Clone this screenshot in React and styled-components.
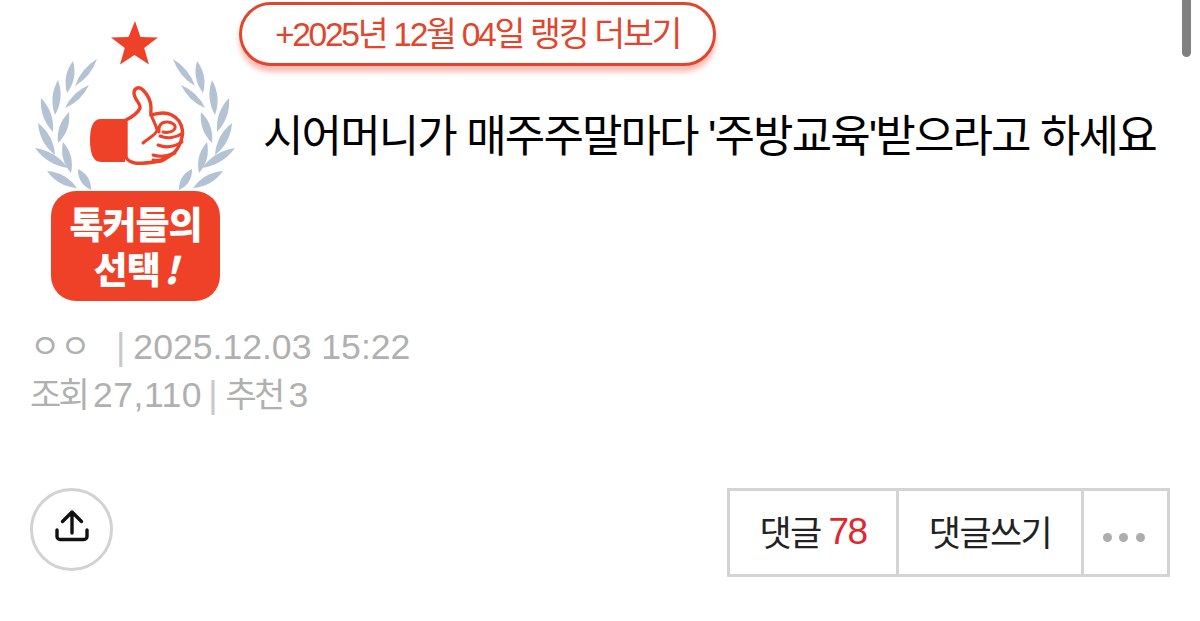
import styled, { createGlobalStyle } from "styled-components";

const GlobalStyle = createGlobalStyle`
  html, body {
    margin: 0;
    padding: 0;
    background: #fff;
    overflow: hidden;
  }
  body {
    font-family: "Liberation Sans", "Noto Sans CJK KR", sans-serif;
  }
`;

const Page = styled.div`
  position: relative;
  width: 1200px;
  height: 621px;
  padding: 0 30px;
  box-sizing: border-box;
`;

const ScrollThumb = styled.div`
  position: absolute;
  top: -10px;
  right: 9px;
  width: 9px;
  height: 67px;
  border-radius: 5px;
  background: #808080;
`;

const TopRow = styled.section`
  display: flex;
  height: 319px;
`;

const BadgeColumn = styled.div`
  display: flex;
  flex-direction: column;
  align-items: center;
  width: 210px;
  margin-right: -1px;
  padding-top: 19px;
  box-sizing: border-box;
`;

const BadgeArt = styled.svg`
  display: block;
  width: 210px;
  height: 182px;
`;

const BadgeLabel = styled.div`
  position: relative;
  width: 169px;
  height: 110px;
  margin: -10px 0 0 1px;
  border-radius: 25px;
  background: #ee4128;
  color: #fff;
  display: flex;
  flex-direction: column;
  align-items: center;
  justify-content: center;
  font-family: "Noto Sans CJK KR", sans-serif;
  font-weight: 900;
  font-size: 37px;
  line-height: 45px;
  letter-spacing: -1px;
`;

const BadgeLine = styled.div`
  height: 45px;
`;

const Bang = styled.span`
  font-style: italic;
  margin-left: 4px;
`;

const Headline = styled.div`
  flex: 1;
  padding: 2px 0 0 0;
  min-width: 0;
`;

const RankPill = styled.div`
  box-sizing: border-box;
  width: 477px;
  height: 64px;
  padding-bottom: 5px;
  border: 3px solid #e2452c;
  border-radius: 32px;
  background: #fff;
  box-shadow: 0 6px 5px rgba(240, 90, 70, 0.4);
  color: #e2452c;
  display: flex;
  align-items: center;
  justify-content: center;
  font-size: 33.6px;
  letter-spacing: -2.3px;
  white-space: nowrap;
`;

const Title = styled.h1`
  margin: 43px 0 0 24px;
  font-size: 44px;
  line-height: 56px;
  font-weight: 400;
  letter-spacing: -1.9px;
  color: #000;
  white-space: nowrap;
`;

const Meta = styled.div`
  color: #b0b0b0;
  font-size: 35.6px;
  line-height: 48px;
  margin-top: 4px;
  white-space: nowrap;
`;

const MetaRow = styled.div`
  display: flex;
  align-items: center;
`;

const Author = styled.span`
  width: 80px;
  font-size: 33px;
`;

const MetaLabel = styled.span`
  font-size: 34px;
  letter-spacing: -2.8px;
  margin-right: 6px;
`;

const MetaValue = styled.span`
  letter-spacing: ${(p) => p.$spacing || "0"};
`;

const Divider = styled.span`
  color: #c8c8c8;
  font-size: 36px;
  margin: 0 8px 0 6px;
`;

const ActionRow = styled.div`
  display: flex;
  justify-content: space-between;
  align-items: flex-start;
  margin-top: 69px;
`;

const ShareButton = styled.button`
  width: 83px;
  height: 83px;
  box-sizing: border-box;
  border: 3px solid #d2d2d2;
  border-radius: 50%;
  background: #fff;
  padding: 0 0 7px;
  display: flex;
  align-items: center;
  justify-content: center;
`;

const CommentBar = styled.div`
  display: flex;
  height: 89px;
  border: 3px solid #d4d4d4;
  box-sizing: border-box;
`;

const BarButton = styled.div`
  width: ${(p) => p.$width}px;
  box-sizing: border-box;
  padding-bottom: 5px;
  border-left: ${(p) => (p.$first ? "0" : "3px solid #d4d4d4")};
  display: flex;
  align-items: center;
  justify-content: center;
  gap: 8px;
  font-size: 35px;
  letter-spacing: -1.6px;
  color: #222;
`;

const Count = styled.span`
  color: #e0272d;
  font-size: 37px;
  margin-top: 4px;
`;

const Dots = styled.div`
  display: flex;
  gap: 7.5px;
  margin: 15px 4px 0 0;
`;

const Dot = styled.i`
  width: 9px;
  height: 9px;
  border-radius: 50%;
  background: #adadad;
`;

// leaves are [tipX, tipY, baseX, baseY, bulge] in badge coordinates
const leaves = [
  [97, 59, 75, 86, 4],
  [73, 61, 67, 93, 5],
  [89, 85, 65, 108, 4],
  [58, 80, 55, 115, 5],
  [69, 112, 58, 143, 5],
  [41, 98, 53, 132, 5],
  [38, 123, 55, 155, 5],
  [63, 142, 71, 173, 5],
  [35, 148, 68, 168, 5],
  [47, 171, 77, 188, 5],
  [78, 169, 91, 190, 5],
];

const leafPath = ([x1, y1, x2, y2, b]) => {
  const mx = (x1 + x2) / 2;
  const my = (y1 + y2) / 2;
  const dx = x2 - x1;
  const dy = y2 - y1;
  const len = Math.hypot(dx, dy);
  const nx = (-dy / len) * b * 1.6;
  const ny = (dx / len) * b * 1.6;
  return `M${x1} ${y1}Q${mx + nx} ${my + ny} ${x2} ${y2}Q${mx - nx} ${my - ny} ${x1} ${y1}Z`;
};

const Wreath = () => (
  <g fill="#b3c3d3">
    {leaves.map((l) => (
      <path key={l.join()} d={leafPath(l)} />
    ))}
  </g>
);

const BadgeDrawing = () => (
  <BadgeArt viewBox="30 19 210 182">
    <path
      fill="#ee4128"
      d="M135 21l5.500 16 17.500.5-13.800 10.500 4.800 16.500-14.500-9.500-14.500 9.500 4.800-16.500-13.800-10.500 17.500-.5z"
    />
    <Wreath />
    <g transform="translate(270 0) scale(-1 1)">
      <Wreath />
    </g>
    <path fill="#ee4128" d="M125 119H101c-8 0-11 8-11 21s3 22 11 22h24z" />
    <path
      fill="#fff"
      stroke="#ee4128"
      strokeWidth="3.4"
      strokeLinejoin="round"
      d="M126 120c6-3 12-7 14-12 1-4-6-9-6-15 0-5 5-7 9-3 5 5 8 12 8 18 0 3-.5 5 0 7 4-1 8-2 12-2 7 0 12 3 16 8 4 6 4 14 2 20-2 6-5 11-10 14-4 3-6 5-10 6-8 1-18 3-26 2-5-1-8-3-9-6z"
    />
    <path
      fill="none"
      stroke="#ee4128"
      strokeWidth="3"
      strokeLinecap="round"
      strokeLinejoin="round"
      d="M151 115c2 5 5 10 6 15 0 4-8 8-14 13M159 132c-1-6 2-10 8-10 5 0 9 3 8 6-1 4-8 5-12 4M160 136c7 3 16 2 23-3M158 145c7 3 16 2 24-3M153 155c6 2 15 1 22-2M153 160c4 1 8 0 12-2"
    />
  </BadgeArt>
);

const ShareGlyph = styled.svg`
  width: 36px;
  height: 36px;
  fill: none;
  stroke: #111;
  stroke-width: 3.4;
  stroke-linecap: round;
  stroke-linejoin: round;
`;

const ShareIcon = () => (
  <ShareGlyph viewBox="0 0 36 36">
    <path d="M18 25V4.500M8.500 13.500L18 4l9.500 9.500" />
    <path d="M3 22v6.500a3 3 0 0 0 3 3h24a3 3 0 0 0 3-3V22" />
  </ShareGlyph>
);

const App = () => {
  return (
    <Page>
      <GlobalStyle />
      <ScrollThumb />
      <TopRow>
        <BadgeColumn>
          <BadgeDrawing />
          <BadgeLabel>
            <BadgeLine>톡커들의</BadgeLine>
            <BadgeLine>
              선택<Bang>!</Bang>
            </BadgeLine>
          </BadgeLabel>
        </BadgeColumn>
        <Headline>
          <RankPill>+2025년 12월 04일 랭킹 더보기</RankPill>
          <Title>시어머니가 매주주말마다 '주방교육'받으라고 하세요</Title>
        </Headline>
      </TopRow>
      <Meta>
        <MetaRow>
          <Author>ㅇㅇ</Author>
          <Divider>|</Divider>
          <MetaValue>2025.12.03 15:22</MetaValue>
        </MetaRow>
        <MetaRow>
          <MetaLabel>조회</MetaLabel>
          <MetaValue $spacing="0.5px">27,110</MetaValue>
          <Divider>|</Divider>
          <MetaLabel>추천</MetaLabel>
          <MetaValue>3</MetaValue>
        </MetaRow>
      </Meta>
      <ActionRow>
        <ShareButton aria-label="공유">
          <ShareIcon />
        </ShareButton>
        <CommentBar>
          <BarButton $first $width={166}>
            댓글 <Count>78</Count>
          </BarButton>
          <BarButton $width={185}>댓글쓰기</BarButton>
          <BarButton $width={86}>
            <Dots>
              <Dot />
              <Dot />
              <Dot />
            </Dots>
          </BarButton>
        </CommentBar>
      </ActionRow>
    </Page>
  );
};

export default App;
